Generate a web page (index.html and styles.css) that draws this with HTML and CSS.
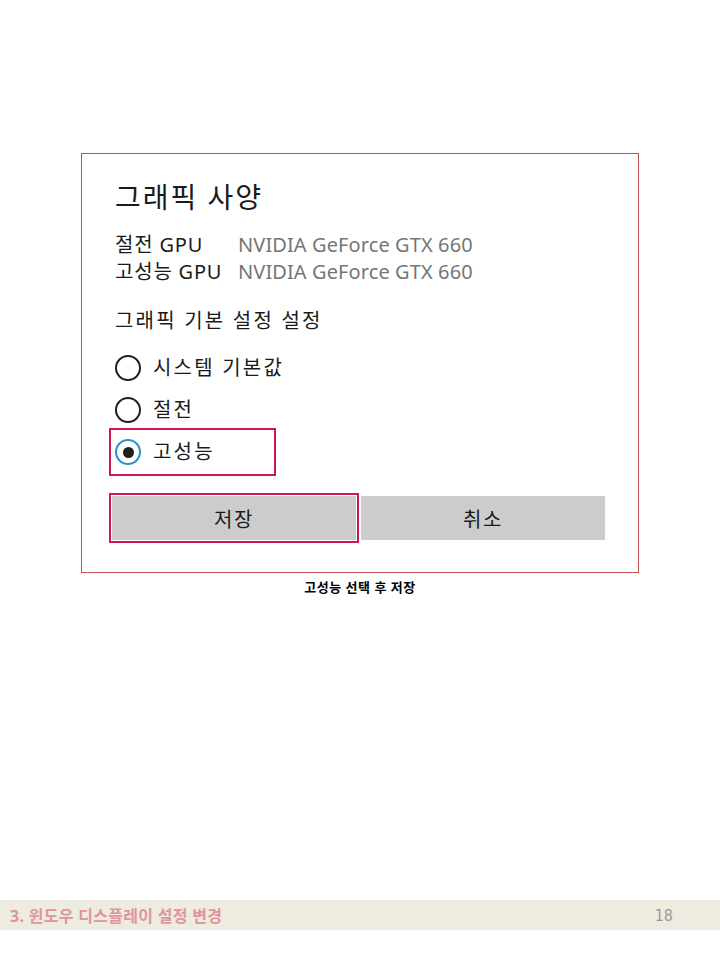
FILE: index.html
```html
<!DOCTYPE html>
<html lang="ko">
<head>
<meta charset="utf-8">
<title>그래픽 사양</title>
<link rel="stylesheet" href="styles.css">
</head>
<body>
<div class="page">
  <div class="frame">
    <h1 class="title">그래픽 사양</h1>
    <div class="gpu">
      <span class="gpu-label">절전 GPU</span><span class="gpu-value">NVIDIA GeForce GTX 660</span>
      <span class="gpu-label">고성능 GPU</span><span class="gpu-value">NVIDIA GeForce GTX 660</span>
    </div>
    <div class="section">그래픽 기본 설정 설정</div>
    <div class="radios">
      <div class="radio-row"><span class="radio"></span><span class="radio-text">시스템 기본값</span></div>
      <div class="radio-row"><span class="radio"></span><span class="radio-text">절전</span></div>
      <div class="radio-row hl"><span class="radio checked"></span><span class="radio-text">고성능</span></div>
    </div>
    <div class="buttons">
      <div class="btn btn-hl">저장</div>
      <div class="btn">취소</div>
    </div>
  </div>
  <div class="caption">고성능 선택 후 저장</div>
  <div class="footer">
    <span class="footer-title">3. 윈도우 디스플레이 설정 변경</span>
    <span class="footer-page">18</span>
  </div>
</div>
</body>
</html>
```

FILE: styles.css
```css
html, body {
  margin: 0;
  padding: 0;
  background: #ffffff;
}
.page {
  min-height: 960px;
  display: flex;
  flex-direction: column;
  font-family: "Noto Sans", "Noto Sans CJK KR", sans-serif;
  color: #1a1a1a;
}
.frame {
  margin-top: 153px;
  margin-left: 81px;
  width: 558px;
  height: 420px;
  box-sizing: border-box;
  border: 1px solid #c0504d;
  padding: 25px 0 0 33px;
}
.title {
  margin: 0;
  font-size: 28px;
  line-height: 36px;
  font-weight: 400;
  letter-spacing: 2px;
  color: #1a1a1a;
}
.gpu {
  margin-top: 16px;
  display: grid;
  grid-template-columns: 123px auto;
  font-size: 20px;
  line-height: 27px;
}
.gpu-label {
  color: #1a1a1a;
  letter-spacing: 0.8px;
}
.gpu-value {
  color: #767676;
  letter-spacing: 0.1px;
}
.section {
  margin-top: 22px;
  font-size: 20px;
  line-height: 28px;
  letter-spacing: 2.2px;
}
.radios {
  margin-top: 12px;
  display: flex;
  flex-direction: column;
}
.radio-row {
  display: flex;
  align-items: center;
  height: 42px;
  width: 161px;
  margin-left: -3px;
  padding-left: 3px;
  box-sizing: border-box;
  font-size: 20px;
  white-space: nowrap;
}
.radio {
  width: 26px;
  height: 26px;
  box-sizing: border-box;
  border: 2px solid #1f1f1f;
  border-radius: 50%;
  display: flex;
  align-items: center;
  justify-content: center;
  flex: none;
}
.radio.checked {
  border: 2.5px solid #2b8fd0;
}
.radio.checked::after {
  content: "";
  width: 11px;
  height: 11px;
  border-radius: 50%;
  background: #1f1f1f;
}
.radio-text {
  margin-left: 12px;
  line-height: 28px;
  letter-spacing: 2.2px;
  flex: none;
}
.hl {
  outline: 2px solid #d0145a;
  outline-offset: 1px;
}
.buttons {
  margin-top: 23px;
  margin-left: -3px;
  display: flex;
  gap: 5px;
}
.btn {
  width: 244px;
  height: 44px;
  background: #cccccc;
  display: flex;
  align-items: center;
  justify-content: center;
  font-size: 20px;
  letter-spacing: 1.5px;
  color: #1a1a1a;
}
.btn-hl {
  outline: 2px solid #d0145a;
  outline-offset: 1px;
}
.caption {
  margin-top: 6px;
  text-align: center;
  font-size: 13px;
  line-height: 16px;
  font-weight: 700;
  letter-spacing: 0.5px;
  color: #000000;
}
.footer {
  margin-top: auto;
  margin-bottom: 30px;
  height: 30px;
  background: #eeebe0;
  display: flex;
  align-items: center;
  justify-content: space-between;
  padding: 0 47px 0 10px;
}
.footer-title {
  font-size: 16px;
  font-weight: 700;
  letter-spacing: 0.3px;
  color: #e0959a;
}
.footer-page {
  font-family: "DejaVu Sans Condensed", "Liberation Sans", sans-serif;
  font-size: 16px;
  color: #9a9a9a;
}
```
